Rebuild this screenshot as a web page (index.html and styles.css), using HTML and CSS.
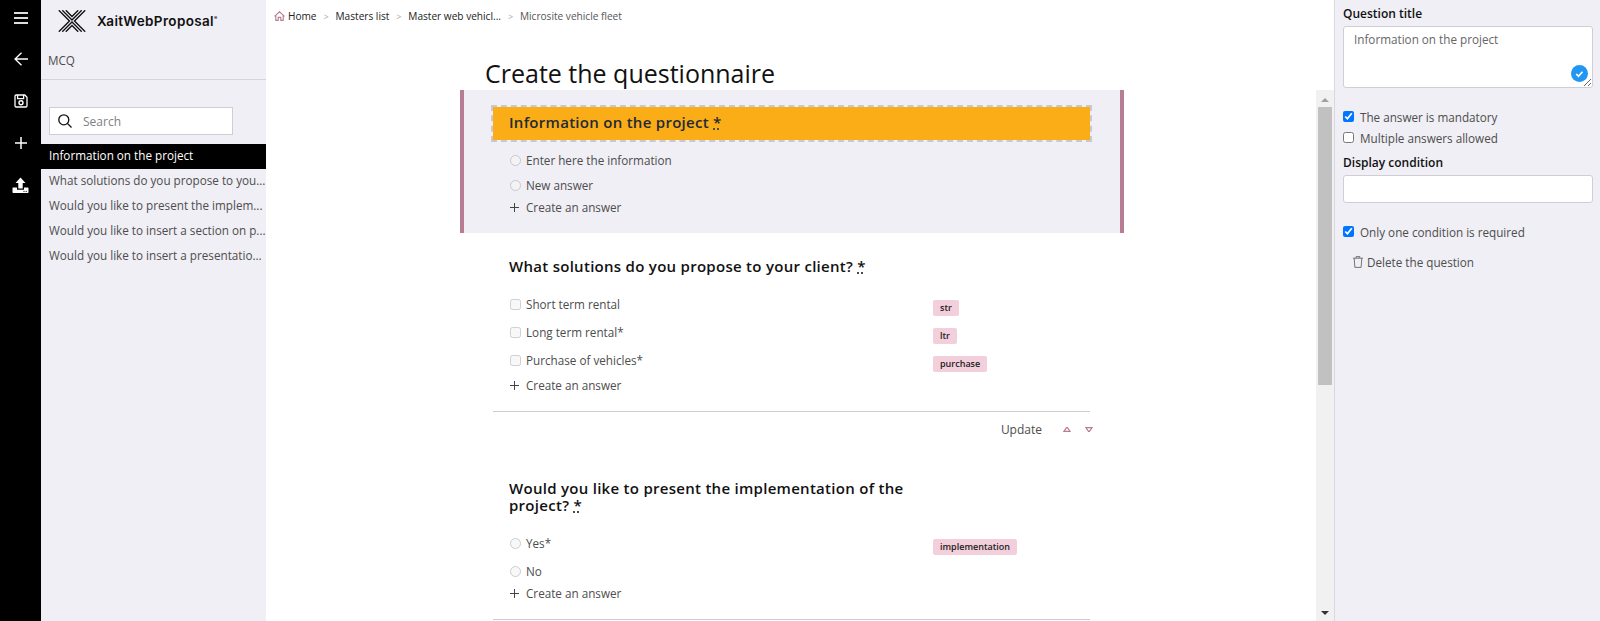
FILE: index.html
```html
<!DOCTYPE html>
<html lang="en">
<head>
    <meta charset="UTF-8">
    <meta name="viewport" content="width=device-width, initial-scale=1.0">
    <title>Create the questionnaire</title>
    <link rel="stylesheet" href="styles.css">
</head>
<body>
    <nav class="rail">
        <a class="rail-item"><svg width="14" height="12" viewBox="0 0 14 12"><path d="M0 1h14M0 6h14M0 11h14" stroke="#ddd" stroke-width="1.8"/></svg></a>
        <a class="rail-item"><svg width="14" height="14" viewBox="0 0 14 14"><path d="M14 7H1M7.500 .7L1 7l6.500 6.300" fill="none" stroke="#fff" stroke-width="1.300"/></svg></a>
        <a class="rail-item"><svg width="14" height="14" viewBox="0 0 14 14"><path d="M1 2.200C1 1.400 1.400 1 2.200 1H10.800L13 3.200V11.800C13 12.600 12.600 13 11.800 13H2.200C1.400 13 1 12.600 1 11.800zM3.600 1V4.600H9.600V1" fill="none" stroke="#fff" stroke-width="1.300"/><circle cx="7" cy="8.700" r="2" fill="none" stroke="#fff" stroke-width="1.400"/></svg></a>
        <a class="rail-item"><svg width="12" height="12" viewBox="0 0 12 12"><path d="M6 0v12M0 6h12" stroke="#fff" stroke-width="1.500"/></svg></a>
        <a class="rail-item"><svg width="17" height="17" viewBox="0 0 17 17"><path d="M8.500 .5L13.500 6H10.700V11.500H6.300V6H3.500z" fill="#fff"/><path d="M1.500 10.500H5V12.800H12V10.500H15.500C16.200 10.500 16.500 10.900 16.500 11.500V15C16.500 15.700 16.200 16 15.500 16H1.500C.8 16 .5 15.700 .5 15V11.500C.5 10.900 .8 10.500 1.500 10.500z" fill="#fff"/><path d="M11.500 14.400h1M13.700 14.400h1" stroke="#000" stroke-width="1"/></svg></a>
    </nav>

    <aside class="sidebar">
        <div class="brand">
            <svg width="28" height="22" viewBox="0 0 28 22" fill="none" stroke="#111" stroke-width="1.400">
                <path d="M.8 .3L11.500 11L.8 21.700M27.200 .3L16.500 11L27.200 21.700"/>
                <path d="M4.300 .3L14 10L23.700 .3M4.300 21.700L14 12L23.700 21.700"/>
                <path d="M7.800 .3L14 6.500L20.200 .3M7.800 21.700L14 15.500L20.200 21.700"/>
            </svg>
            <span class="brand-name">XaitWebProposal<sup>®</sup></span>
        </div>
        <div class="section-name">MCQ</div>
        <div class="search">
            <svg width="14" height="14" viewBox="0 0 14 14" fill="none" stroke="#111" stroke-width="1.300"><circle cx="5.800" cy="5.800" r="5"/><path d="M9.400 9.400L13.500 13.500"/></svg>
            <input type="text" placeholder="Search">
        </div>
        <ul class="question-list">
            <li class="active">Information on the project</li>
            <li>What solutions do you propose to you...</li>
            <li>Would you like to present the implem...</li>
            <li>Would you like to insert a section on p...</li>
            <li>Would you like to insert a presentatio...</li>
        </ul>
    </aside>

    <main class="content">
        <div class="breadcrumb">
            <svg width="11" height="10" viewBox="0 0 11 10" fill="none" stroke="#b87c95" stroke-width="1.100"><path d="M.5 5.300L5.500 .8L10.500 5.300M1.800 4.500V9.400H4.200V6.400H6.800V9.400H9.200V4.500"/></svg>
            <a class="crumb-home">Home</a><span class="sep">&gt;</span>
            <a>Masters list</a><span class="sep">&gt;</span>
            <a>Master web vehicl...</a><span class="sep">&gt;</span>
            <a class="current">Microsite vehicle fleet</a>
        </div>
        <h1>Create the questionnaire</h1>

        <div class="scroll-area">
            <div class="questions">
                <section class="question selected">
                    <h2><span>Information on the project <abbr title="required">*</abbr></span></h2>
                    <div class="answers">
                        <div class="answer"><input type="radio" disabled><span>Enter here the information</span></div>
                        <div class="answer"><input type="radio" disabled><span>New answer</span></div>
                        <a class="create"><svg width="9" height="9" viewBox="0 0 9 9"><path d="M4.500 0v9M0 4.500h9" stroke="#444" stroke-width="1"/></svg>Create an answer</a>
                    </div>
                </section>

                <section class="question">
                    <h2><span>What solutions do you propose to your client? <abbr title="required">*</abbr></span></h2>
                    <div class="answers">
                        <div class="answer tagged"><input type="checkbox" disabled><span>Short term rental</span><em class="tag">str</em></div>
                        <div class="answer tagged"><input type="checkbox" disabled><span>Long term rental*</span><em class="tag">ltr</em></div>
                        <div class="answer tagged"><input type="checkbox" disabled><span>Purchase of vehicles*</span><em class="tag">purchase</em></div>
                        <a class="create"><svg width="9" height="9" viewBox="0 0 9 9"><path d="M4.500 0v9M0 4.500h9" stroke="#444" stroke-width="1"/></svg>Create an answer</a>
                    </div>
                    <div class="actions">
                        <a>Update</a>
                        <svg width="8" height="5" viewBox="0 0 8 5"><path d="M.9 4.400L3.500 .7H4.500L7.100 4.400z" fill="none" stroke="#b87c95" stroke-width="1.200"/></svg>
                        <svg width="8" height="5" viewBox="0 0 8 5"><path d="M.9 .6H7.100L4.500 4.300H3.500z" fill="none" stroke="#b87c95" stroke-width="1.200"/></svg>
                    </div>
                </section>

                <section class="question">
                    <h2><span>Would you like to present the implementation of the project? <abbr title="required">*</abbr></span></h2>
                    <div class="answers">
                        <div class="answer tagged"><input type="radio" disabled><span>Yes*</span><em class="tag">implementation</em></div>
                        <div class="answer"><input type="radio" disabled><span>No</span></div>
                        <a class="create"><svg width="9" height="9" viewBox="0 0 9 9"><path d="M4.500 0v9M0 4.500h9" stroke="#444" stroke-width="1"/></svg>Create an answer</a>
                    </div>
                    <div class="actions"></div>
                </section>
            </div>
            <div class="scrollbar">
                <svg width="8" height="4" viewBox="0 0 8 4"><path d="M0 4L4 0L8 4z" fill="#a0a0a0"/></svg>
                <div class="thumb"></div>
                <svg width="8" height="4" viewBox="0 0 8 4"><path d="M0 0H8L4 4z" fill="#333"/></svg>
            </div>
        </div>
    </main>

    <aside class="panel">
        <label class="field-label" for="title">Question title</label>
        <div class="title-field">
            <textarea id="title" spellcheck="false">Information on the project</textarea>
            <span class="checked-badge"><svg width="9" height="8" viewBox="0 0 9 8"><path d="M1.200 4L3.500 6.200L7.500 1.800" fill="none" stroke="#fff" stroke-width="1.700"/></svg></span>
        </div>
        <label class="check"><input type="checkbox" checked><span>The answer is mandatory</span></label>
        <label class="check"><input type="checkbox"><span>Multiple answers allowed</span></label>
        <label class="field-label condition-label" for="condition">Display condition</label>
        <input class="condition" id="condition" type="text">
        <label class="check"><input type="checkbox" checked><span>Only one condition is required</span></label>
        <a class="delete"><svg width="10" height="12" viewBox="0 0 10 12" fill="none" stroke="#666" stroke-width=".9"><path d="M0 2.200H10M3.200 2V.6H6.800V2M1.200 2.400L1.900 11.400H8.100L8.800 2.400"/></svg>Delete the question</a>
    </aside>
</body>
</html>
```
FILE: styles.css
```css
* {
    box-sizing: border-box;
}
body {
    margin: 0;
    height: 621px;
    display: flex;
    overflow: hidden;
    background: #fff;
    color: #4d4d4d;
    font-family: "Open Sans", sans-serif;
    font-size: 11.7px;
}
svg {
    flex: none;
}

/* left icon bar */
.rail {
    width: 41px;
    background: #000;
    flex: none;
}
.rail-item {
    display: flex;
    height: 42px;
    align-items: center;
    justify-content: center;
}
.rail-item:first-child {
    height: 38px;
    padding-bottom: 2px;
}

.sidebar {
    width: 225px;
    background: #f0eff5;
    flex: none;
}
.brand {
    display: flex;
    align-items: center;
    height: 41px;
    padding-left: 17px;
}
.brand-name {
    margin-left: 11px;
    color: #111;
    font-family: Inter, sans-serif;
    font-size: 13.5px;
    font-weight: 600;
    letter-spacing: 0.35px;
    white-space: nowrap;
}
.brand-name sup {
    font-size: 5px;
    letter-spacing: 0;
    vertical-align: 6px;
    line-height: 0;
}
.section-name {
    height: 39px;
    line-height: 38px;
    padding-left: 7px;
    border-bottom: 1px solid #d5d4da;
}
.search {
    display: flex;
    align-items: center;
    width: 184px;
    height: 28px;
    margin: 27px 0 9px 8px;
    padding-left: 8px;
    background: #fff;
    border: 1px solid #cfced6;
}
.search input {
    width: 140px;
    margin-left: 11px;
    padding: 0;
    border: 0;
    font: inherit;
    font-size: 12px;
}
.search input::placeholder {
    color: #808080;
}
.question-list {
    margin: 0;
    padding: 0;
    list-style: none;
}
.question-list li {
    height: 25px;
    line-height: 23px;
    padding-left: 8px;
    white-space: nowrap;
}
.question-list .active {
    background: #000;
    color: #fff;
    font-weight: 500;
}

/* questionnaire */
.content {
    width: 1068px;
    display: flex;
    flex-direction: column;
    flex: none;
}
.breadcrumb {
    display: flex;
    align-items: center;
    height: 32px;
    padding-left: 8px;
    color: #222;
    font-size: 10.1px;
}
.breadcrumb a {
    white-space: nowrap;
}
.crumb-home {
    margin-left: 3px;
}
.breadcrumb .current {
    color: #555;
}
.sep {
    width: 19px;
    text-align: center;
    color: #aaa;
    font-size: 9px;
}
h1 {
    height: 58px;
    margin: 0;
    padding: 24px 0 0 219px;
    color: #111;
    font-size: 25px;
    font-weight: 400;
    line-height: 34px;
}
.scroll-area {
    display: flex;
    justify-content: space-between;
    height: 531px;
}
.questions {
    width: 664px;
    margin-left: 194px;
    overflow: hidden;
}
.question {
    padding: 15px 28px 0 27px;
    border: solid transparent;
    border-width: 0 4px;
}
.question.selected {
    height: 143px;
    background: #f0eff5;
    border-color: #b87c95;
}
h2 {
    margin: 0;
    padding: 8px 16px 9px;
    color: #111;
    font-size: 15px;
    font-weight: 600;
    letter-spacing: 0.28px;
    line-height: 17px;
    border: 2px solid transparent;
}
h2 span {
    display: block;
    max-width: 420px;
}
.selected h2 {
    height: 37px;
    padding: 7px 16px;
    color: #222a35;
    background: #fbad18;
    background-clip: padding-box;
    border: 2px dashed #c9c8d0;
}
.answers {
    padding: 6px 18px 0 19px;
}
.answer {
    display: flex;
    align-items: flex-start;
    height: 25px;
    line-height: 25px;
}
.answer.tagged {
    height: 28px;
}
.answer input {
    width: 11px;
    height: 11px;
    margin: 7px 5px 0 0;
}
.answer span {
    width: 407px;
}
.tag {
    margin-top: 8px;
    padding: 0 7px;
    background: #f3cfdc;
    border-radius: 2px;
    color: #222;
    font-size: 9px;
    font-style: normal;
    font-weight: 600;
    line-height: 16px;
}
.create {
    display: flex;
    align-items: center;
    gap: 7px;
    height: 18px;
}
.actions {
    display: flex;
    justify-content: flex-end;
    align-items: center;
    height: 44px;
    margin: 17px 2px 0;
    padding-bottom: 8px;
    border-top: 1px solid #ccccd4;
}
.actions a {
    font-size: 12px;
    margin-right: 7px;
}
.actions svg {
    margin-left: 14px;
}
.actions svg:last-child {
    margin-right: -3px;
}
.scrollbar {
    display: flex;
    flex-direction: column;
    align-items: center;
    width: 18px;
    padding: 8px 0 6px;
    background: #f1f1f1;
}
.thumb {
    width: 14px;
    height: 278px;
    margin: 5px 0 auto;
    background: #c1c1c1;
}

/* question settings */
.panel {
    flex: 1;
    padding: 4px 7px 0 8px;
    background: #f0eff5;
    border-left: 1px solid #d9d8de;
}
.field-label {
    display: block;
    height: 22px;
    color: #111;
    font-size: 12px;
    font-weight: 600;
    line-height: 19px;
}
.title-field {
    position: relative;
    height: 62px;
    margin-bottom: 18px;
}
textarea, .condition {
    display: block;
    width: 100%;
    background: #fff;
    border: 1px solid #cfced6;
    border-radius: 3px;
    color: #666;
    font: inherit;
}
textarea {
    height: 62px;
    padding: 4px 10px;
    line-height: 17px;
}
.checked-badge {
    position: absolute;
    right: 5px;
    bottom: 6px;
    display: flex;
    align-items: center;
    justify-content: center;
    width: 17px;
    height: 17px;
    background: #2196f3;
    border-radius: 50%;
}
.check {
    display: flex;
    align-items: center;
    height: 21px;
}
.check input {
    width: 11px;
    height: 11px;
    margin: 0 6px 0 0;
}
.condition-label {
    margin-top: 5px;
}
.condition {
    height: 28px;
    margin-bottom: 18px;
}
.delete {
    display: flex;
    align-items: center;
    gap: 4px;
    height: 20px;
    margin: 10px 0 0 10px;
}
```
